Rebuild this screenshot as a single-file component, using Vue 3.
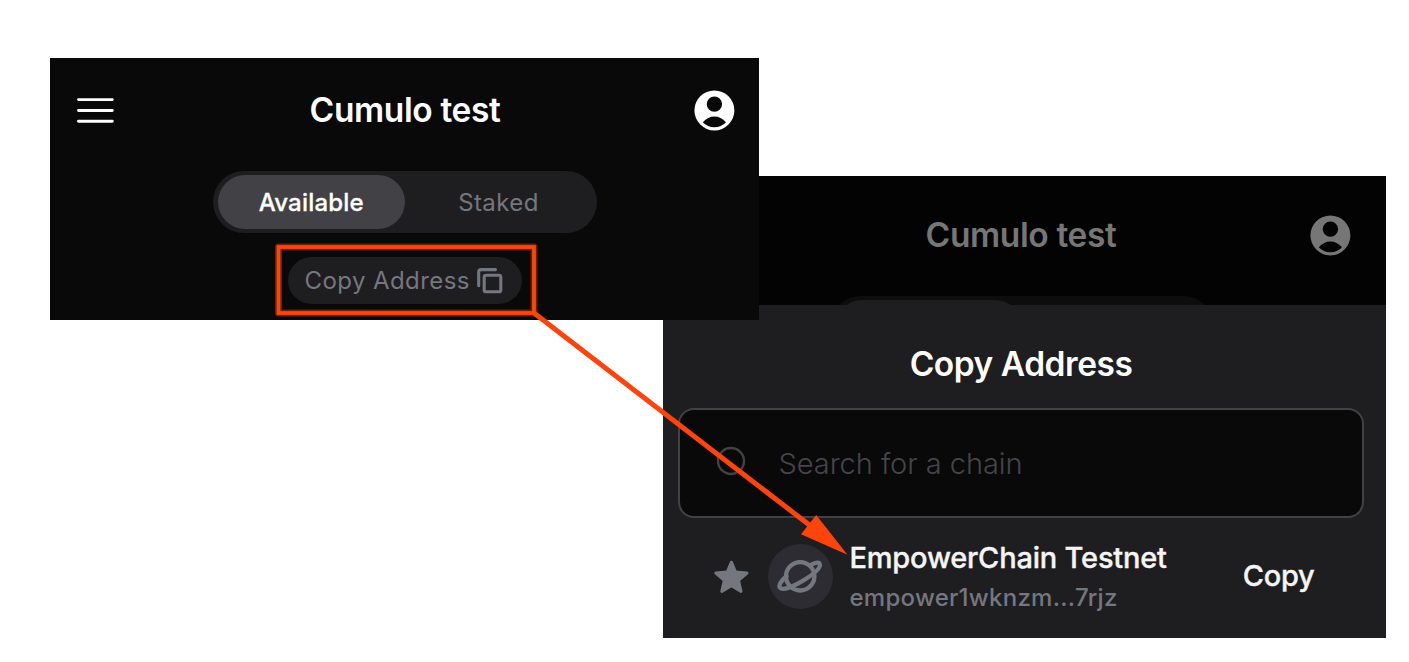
<script setup>
const tabs = ['Available', 'Staked']
const chain = { name: 'EmpowerChain Testnet', address: 'empower1wknzm...7rjz' }
</script>

<template>
  <main class="canvas">
    <section class="panel sheet-panel">
      <header class="header">
        <h1 class="title">Cumulo test</h1>
        <svg class="account" viewBox="-.4 -.4 41 41">
          <path fill="currentColor" fill-rule="evenodd" d="M20 0a20 20 0 1 1 0 40a20 20 0 0 1 0-40zM20 6a7.7 7.7 0 1 0 0 15.4a7.7 7.7 0 0 0 0-15.4zM8.4 31.8Q13.2 36.9 20 36.9Q26.8 36.9 31.6 31.8Q26.4 26 20 26Q13.6 26 8.4 31.8z" />
        </svg>
      </header>
      <div class="tabs tabs-dim"><span class="tab active"></span></div>
      <div class="sheet">
        <h2 class="sheet-title">Copy Address</h2>
        <div class="search">
          <svg class="lens" viewBox="0 0 30 30"><circle cx="15" cy="15" r="13" /></svg>
          <span class="placeholder">Search for a chain</span>
        </div>
        <div class="row">
          <svg class="star" viewBox="0 0 36 36">
            <path d="M18.4 3.2L22.6 13L34 14L25.5 21.3L28 32.4L18.4 26.8L8.8 32.4L11.3 21.3L2.8 14L14.2 13Z" />
          </svg>
          <span class="avatar">
            <svg class="planet" viewBox="0 0 48 36">
              <circle cx="23.2" cy="17.3" r="14.2" />
              <path d="M33.9 5.9C39 3.1 42.7 2.7 42.9 5.9C43.1 9.7 37 14.9 26.5 21.3C16 27.7 5.5 31.7 2.9 28.7C1.1 26.3 4.5 21.3 9.5 17.3" />
            </svg>
          </span>
          <div class="details">
            <span class="name">{{ chain.name }}</span>
            <span class="address">{{ chain.address }}</span>
          </div>
          <span class="copy">Copy</span>
        </div>
      </div>
    </section>

    <section class="panel wallet-panel">
      <header class="header">
        <svg class="menu" viewBox="0 0 38 28"><path d="M2.5 2.6H36.3M2.5 13.5H36.3M2.5 24.3H36.3" /></svg>
        <h1 class="title">Cumulo test</h1>
        <svg class="account" viewBox="-.4 -.4 41 41">
          <path fill="currentColor" fill-rule="evenodd" d="M20 0a20 20 0 1 1 0 40a20 20 0 0 1 0-40zM20 6a7.7 7.7 0 1 0 0 15.4a7.7 7.7 0 0 0 0-15.4zM8.4 31.8Q13.2 36.9 20 36.9Q26.8 36.9 31.6 31.8Q26.4 26 20 26Q13.6 26 8.4 31.8z" />
        </svg>
      </header>
      <div class="tabs">
        <span v-for="(tab, i) in tabs" :key="tab" class="tab" :class="{ active: i === 0 }">{{ tab }}</span>
      </div>
      <div class="copy-pill">
        <span class="pill-text">Copy Address</span>
        <svg class="copy-icon" viewBox="0 0 26 26">
          <rect x="7.2" y="7.2" width="16.6" height="16.6" rx="1.8" />
          <path d="M1.7 17.8V4Q1.7 1.6 4.1 1.6H18.5" />
        </svg>
      </div>
    </section>

    <svg class="annotation" viewBox="0 0 1409 662">
      <rect class="halo" x="278.5" y="247" width="255.5" height="66" />
      <rect class="frame" x="278.5" y="247" width="255.5" height="66" />
      <path class="line" d="M534 313L812 527" />
      <path class="head" d="M847.5 554.7L816.2 515L801 534.3Z" />
    </svg>
  </main>
</template>

<style>
body { margin: 0; background: #fff; }
</style>

<style scoped>
.canvas { position: relative; width: 1409px; height: 662px; overflow: hidden; background: #fff; font-family: Inter, "Liberation Sans", sans-serif; white-space: nowrap; }
.panel { position: absolute; box-sizing: border-box; overflow: hidden; display: flex; flex-direction: column; align-items: center; }
.wallet-panel { left: 50px; top: 58px; width: 709px; height: 262px; background: #090909; color: #fff; }
.sheet-panel { left: 663px; top: 176px; width: 723px; height: 462px; background: #030303; color: #767676; }
.header { width: 100%; height: 104px; box-sizing: border-box; padding: 1px 24px 0 26px; display: grid; grid-template-columns: 40px 1fr 41px; align-items: center; flex: none; }
.sheet-panel .header { height: 120px; padding: 0 35px 1px 29px; }
.title { grid-column: 2; margin: 0 0 2px; text-align: center; font-size: 33.5px; line-height: 40px; font-weight: 600; letter-spacing: -.38px; }
.account { grid-column: 3; width: 41px; height: 41px; }
.menu { width: 38px; height: 28px; fill: none; stroke: #fff; stroke-width: 2.9; stroke-linecap: round; }
.tabs { flex: none; box-sizing: border-box; width: 384px; height: 62px; margin-top: 9px; padding: 4px 5px; border-radius: 31px; background: #1e1e20; display: flex; }
.tab { width: 187px; height: 54px; border-radius: 27px; line-height: 55px; text-align: center; text-indent: 1px; font-size: 24px; letter-spacing: .4px; color: #75777f; }
.tab.active { background: #424146; color: #fff; font-weight: 500; letter-spacing: .2px; text-indent: .5px; -webkit-text-stroke: .3px currentColor; }
.tabs-dim { margin-top: 0; margin-right: 5px; background: #0d0d0d; }
.tabs-dim .active { background: #1e1e20; }
.copy-pill { flex: none; box-sizing: border-box; width: 234px; height: 47px; margin-top: 24px; padding: 0 19px 0 17px; border-radius: 24px; background: #1e1e20; display: flex; align-items: center; justify-content: space-between; }
.pill-text { color: #75777f; font-size: 24px; letter-spacing: .42px; }
.copy-icon { width: 26px; height: 26px; fill: none; stroke: #75777f; stroke-width: 3.1; stroke-linecap: round; }
.sheet { position: relative; flex: none; box-sizing: border-box; width: 723px; height: 333px; margin-top: -53px; padding: 39px 22px 0 15px; background: #1e1e20; color: #fff; }
.sheet-title { margin: 0; line-height: 40px; font-size: 33.5px; font-weight: 600; letter-spacing: -.47px; text-align: center; }
.search { box-sizing: border-box; width: 686px; height: 110px; margin-top: 24px; padding-left: 36px; border: 2px solid #424146; border-radius: 16px; background: #090909; display: flex; align-items: center; gap: 32.5px; }
.lens { width: 30px; height: 30px; margin-bottom: 4px; fill: none; stroke: #424146; stroke-width: 2.4; }
.placeholder { color: #46454a; font-size: 29px; font-weight: 300; letter-spacing: -.05px; }
.row { height: 117px; display: flex; align-items: center; padding: 0 35px; }
.star { width: 36px; height: 36px; fill: #75777f; stroke: #75777f; stroke-width: 3; stroke-linejoin: round; }
.avatar { width: 65px; height: 65px; margin-left: 19px; border-radius: 50%; background: #2d2c32; display: flex; align-items: center; justify-content: center; }
.planet { width: 48px; height: 36px; fill: none; stroke: #75777f; stroke-width: 4.3; stroke-linecap: round; }
.details { margin-left: 16.5px; padding-top: 2px; display: flex; flex-direction: column; }
.name { font-size: 29px; line-height: 40px; font-weight: 500; letter-spacing: -.2px; color: #f5f5f6; -webkit-text-stroke: .35px currentColor; }
.address { font-size: 24px; line-height: 40px; font-weight: 500; letter-spacing: .27px; color: #75777f; }
.copy { margin-left: auto; margin-right: 14.5px; padding-bottom: 2px; font-size: 29px; font-weight: 500; letter-spacing: -.3px; color: #f5f5f6; -webkit-text-stroke: .35px currentColor; }
.annotation { position: absolute; inset: 0; width: 1409px; height: 662px; fill: none; stroke: #fc440c; }
.halo { stroke-width: 7; stroke-opacity: .4; stroke-linejoin: round; }
.frame { stroke-width: 3.8; }
.line { stroke-width: 5; }
.head { fill: #fc440c; stroke: none; }
</style>
